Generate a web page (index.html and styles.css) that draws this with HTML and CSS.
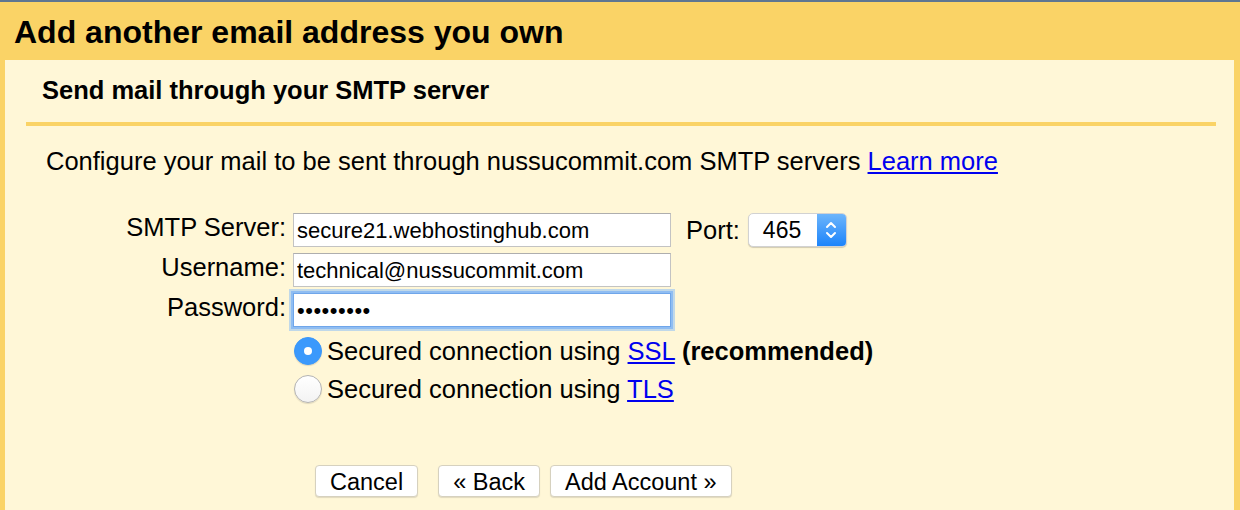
FILE: index.html
```html
<!DOCTYPE html>
<html>
<head>
<meta charset="utf-8">
<link rel="stylesheet" href="styles.css">
</head>
<body>
<div class="page">
  <div class="topbar"></div>
  <div class="header"><h1 class="title">Add another email address you own</h1></div>
  <div class="panel">
    <h2 class="subtitle">Send mail through your SMTP server</h2>
    <div class="rule"></div>
    <p class="intro">Configure your mail to be sent through nussucommit.com SMTP servers <a href="#" class="link">Learn more</a></p>
    <div class="form">
      <label class="label">SMTP Server:</label>
      <div class="field-row">
        <input class="text-input" type="text" value="secure21.webhostinghub.com">
        <span class="port-label">Port:</span>
        <div class="select">
          <span class="select-value">465</span>
          <span class="select-arrows">
            <svg width="14" height="22" viewBox="0 0 14 22"><path d="M3 8 L7 4 L11 8" fill="none" stroke="#fff" stroke-width="2" stroke-linecap="round" stroke-linejoin="round"/><path d="M3 14 L7 18 L11 14" fill="none" stroke="#fff" stroke-width="2" stroke-linecap="round" stroke-linejoin="round"/></svg>
          </span>
        </div>
      </div>
      <label class="label">Username:</label>
      <div class="field-row">
        <input class="text-input" type="text" value="technical@nussucommit.com">
      </div>
      <label class="label">Password:</label>
      <div class="field-row">
        <input class="text-input focused" type="password" value="123456789">
      </div>
      <div class="radios">
        <label class="radio-row"><input class="radio" type="radio" name="sec" checked><span class="radio-text">Secured connection using <a href="#" class="link">SSL</a> <b>(recommended)</b></span></label>
        <label class="radio-row"><input class="radio" type="radio" name="sec"><span class="radio-text">Secured connection using <a href="#" class="link">TLS</a></span></label>
      </div>
    </div>
    <div class="buttons">
      <button class="btn">Cancel</button>
      <button class="btn btn-back">« Back</button>
      <button class="btn">Add Account »</button>
    </div>
  </div>
</div>
</body>
</html>
```

FILE: styles.css
```css
html, body {
  margin: 0;
  padding: 0;
}
body {
  background: #fad366;
  font-family: "Liberation Sans", Arial, Helvetica, sans-serif;
  color: #000;
}
.page {
  height: 510px;
  display: flex;
  flex-direction: column;
  overflow: hidden;
}
.topbar {
  height: 2px;
  background: #5e7691;
  flex: none;
}
.header {
  flex: none;
  height: 58px;
  box-sizing: border-box;
  padding: 14px 0 0 14px;
}
.title {
  margin: 0;
  font-size: 32px;
  line-height: 32px;
  font-weight: bold;
}
.panel {
  flex: 1;
  margin: 0 6px 0 5px;
  background: #fff7d7;
  padding-top: 15px;
}
.subtitle {
  margin: 0 0 0 37px;
  font-size: 25.5px;
  line-height: 30px;
  font-weight: bold;
}
.rule {
  height: 4px;
  background: #fad366;
  margin: 17px 18px 0 21px;
}
.intro {
  margin: 20px 0 0 41px;
  font-size: 25.5px;
  line-height: 30px;
}
.link {
  color: #0000ee;
  text-decoration: underline;
}
.form {
  margin-top: 37px;
  display: grid;
  grid-template-columns: 288px auto;
  row-gap: 6px;
}
.label {
  text-align: right;
  padding-right: 7px;
  font-size: 25.5px;
  line-height: 28px;
  align-self: start;
}
.field-row {
  display: flex;
  align-items: center;
}
.text-input {
  width: 378px;
  height: 34px;
  box-sizing: border-box;
  border: 1px solid #c3c3c3;
  border-top-color: #aeaeae;
  background: #fff;
  font-family: "Liberation Sans", Arial, sans-serif;
  font-size: 22px;
  padding: 1px 3px 0;
  margin: 0;
  color: #000;
  outline: none;
}
.text-input.focused {
  border-color: #6fa6ea;
  box-shadow: 0 0 0 2px #8fbdf2, 0 0 0 4px rgba(150, 195, 245, 0.6);
  letter-spacing: 0.5px;
}
.port-label {
  margin-left: 15px;
  font-size: 25.5px;
}
.select {
  margin-left: 8px;
  width: 99px;
  height: 34px;
  box-sizing: border-box;
  border-radius: 5px;
  background: #fff;
  border: 1px solid #d2d2d2;
  box-shadow: 0 1px 1px rgba(0, 0, 0, 0.18);
  display: flex;
  overflow: hidden;
}
.select-value {
  flex: 1;
  font-size: 23px;
  line-height: 32px;
  padding-left: 14px;
}
.select-arrows {
  width: 29px;
  background: linear-gradient(#6db5fb, #1c84fb);
  display: flex;
  align-items: center;
  justify-content: center;
}
.radios {
  grid-column: 2;
  margin-top: -1px;
  display: flex;
  flex-direction: column;
}
.radio-row {
  height: 38px;
  line-height: 38px;
  font-size: 25.5px;
  display: flex;
  align-items: center;
}
.radio-text {
  white-space: nowrap;
}
.radio {
  appearance: none;
  -webkit-appearance: none;
  width: 28px;
  height: 28px;
  margin: 0 5px 0 1px;
  border-radius: 50%;
  box-sizing: border-box;
  border: 1px solid #b3b3b3;
  background: linear-gradient(#ffffff, #f3f3f3);
  box-shadow: 0 1px 1px rgba(0, 0, 0, 0.12);
  position: relative;
  flex: none;
}
.radio:checked {
  border-color: #3a98fb;
  background: #3b99fc;
}
.radio:checked::after {
  content: "";
  position: absolute;
  left: 9px;
  top: 9px;
  width: 8px;
  height: 8px;
  border-radius: 50%;
  background: #fff;
}
.radio-row b {
  font-weight: bold;
}
.buttons {
  margin-top: 57px;
  padding-left: 310px;
  display: flex;
}
.btn {
  height: 32px;
  box-sizing: border-box;
  padding: 0 14px;
  border: 1px solid #d6d1bf;
  border-radius: 4px;
  background: #fff;
  box-shadow: 0 1px 1px rgba(0, 0, 0, 0.12);
  font-family: "Liberation Sans", Arial, sans-serif;
  font-size: 23.5px;
  line-height: 30px;
  padding-top: 1px;
  color: #000;
  margin-right: 10px;
}
.btn:first-child {
  margin-right: 20px;
}
```
